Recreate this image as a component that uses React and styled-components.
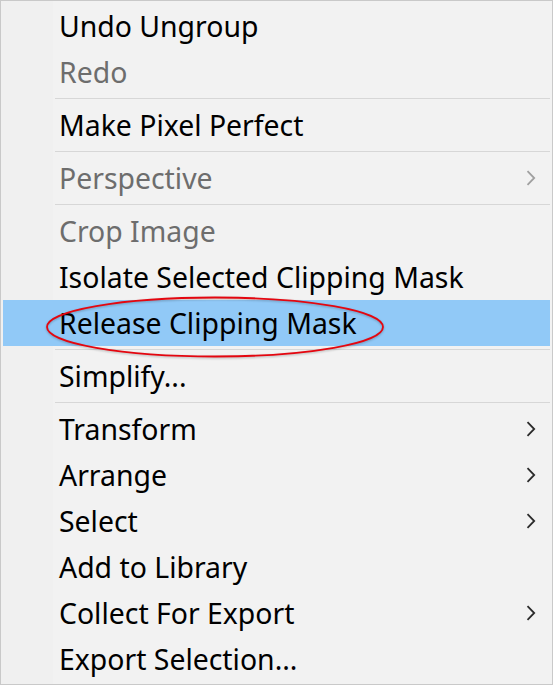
import React from "react";
import styled, { createGlobalStyle } from "styled-components";

const GlobalStyle = createGlobalStyle`
  html, body {
    margin: 0;
    padding: 0;
    background: #f0f0f0;
  }
  body {
    font-family: "Noto Sans", "Open Sans", sans-serif;
  }
`;

const items = [
  { label: "Undo Ungroup" },
  { label: "Redo", disabled: true },
  { sep: true },
  { label: "Make Pixel Perfect" },
  { sep: true },
  { label: "Perspective", disabled: true, sub: true },
  { sep: true },
  { label: "Crop Image", disabled: true },
  { label: "Isolate Selected Clipping Mask" },
  { label: "Release Clipping Mask", active: true, circled: true },
  { sep: true },
  { label: "Simplify..." },
  { sep: true },
  { label: "Transform", sub: true },
  { label: "Arrange", sub: true },
  { label: "Select", sub: true },
  { label: "Add to Library" },
  { label: "Collect For Export", sub: true },
  { label: "Export Selection..." },
];

function Chevron({ disabled }) {
  return (
    <Arrow width="10" height="16" viewBox="0 0 10 16">
      <path
        d="M1.5 1.2 L8.2 8 L1.5 14.8"
        fill="none"
        stroke={disabled ? "#a0a0a0" : "#2b2b2b"}
        strokeWidth="1.8"
      />
    </Arrow>
  );
}

export default function App() {
  return (
    <>
      <GlobalStyle />
      <Menu>
        {items.map((it, i) =>
          it.sep ? (
            <Separator key={i} />
          ) : (
            <Item key={i} $active={it.active} $disabled={it.disabled}>
              <Label>{it.label}</Label>
              {it.sub && <Chevron disabled={it.disabled} />}
              {it.circled && (
                <Circle width="344" height="64" viewBox="0 0 344 64">
                  <ellipse
                    cx="172"
                    cy="32"
                    rx="168"
                    ry="29.5"
                    fill="none"
                    stroke="#e4060f"
                    strokeWidth="1.8"
                  />
                </Circle>
              )}
            </Item>
          )
        )}
      </Menu>
    </>
  );
}

const Menu = styled.div`
  position: relative;
  width: 553px;
  height: 685px;
  box-sizing: border-box;
  border: 1px solid #c9c9c9;
  padding: 2px;
  background: linear-gradient(to right, #f0f0f0 52px, #f2f2f2 52px);
  display: flex;
  flex-direction: column;
`;

const Item = styled.div`
  position: relative;
  height: 46px;
  flex: 0 0 46px;
  display: flex;
  align-items: center;
  padding: 0 14px 0 56px;
  background: ${(p) => (p.$active ? "#91c9f7" : "transparent")};
  color: ${(p) => (p.$disabled ? "#6d6d6d" : "#000")};
  font-size: 28.4px;
`;

const Label = styled.span`
  flex: 1;
  white-space: nowrap;
  line-height: 46px;
`;

const Arrow = styled.svg`
  display: block;
  flex: 0 0 auto;
`;

const Circle = styled.svg`
  position: absolute;
  left: 40px;
  top: -5px;
  overflow: visible;
  filter: drop-shadow(0 1px 1px rgba(0, 0, 0, 0.25));
`;

const Separator = styled.div`
  flex: 0 0 7px;
  margin-left: 52px;
  display: flex;
  align-items: center;
  &::after {
    content: "";
    display: block;
    width: 100%;
    height: 1px;
    background: #d7d7d7;
  }
`;
